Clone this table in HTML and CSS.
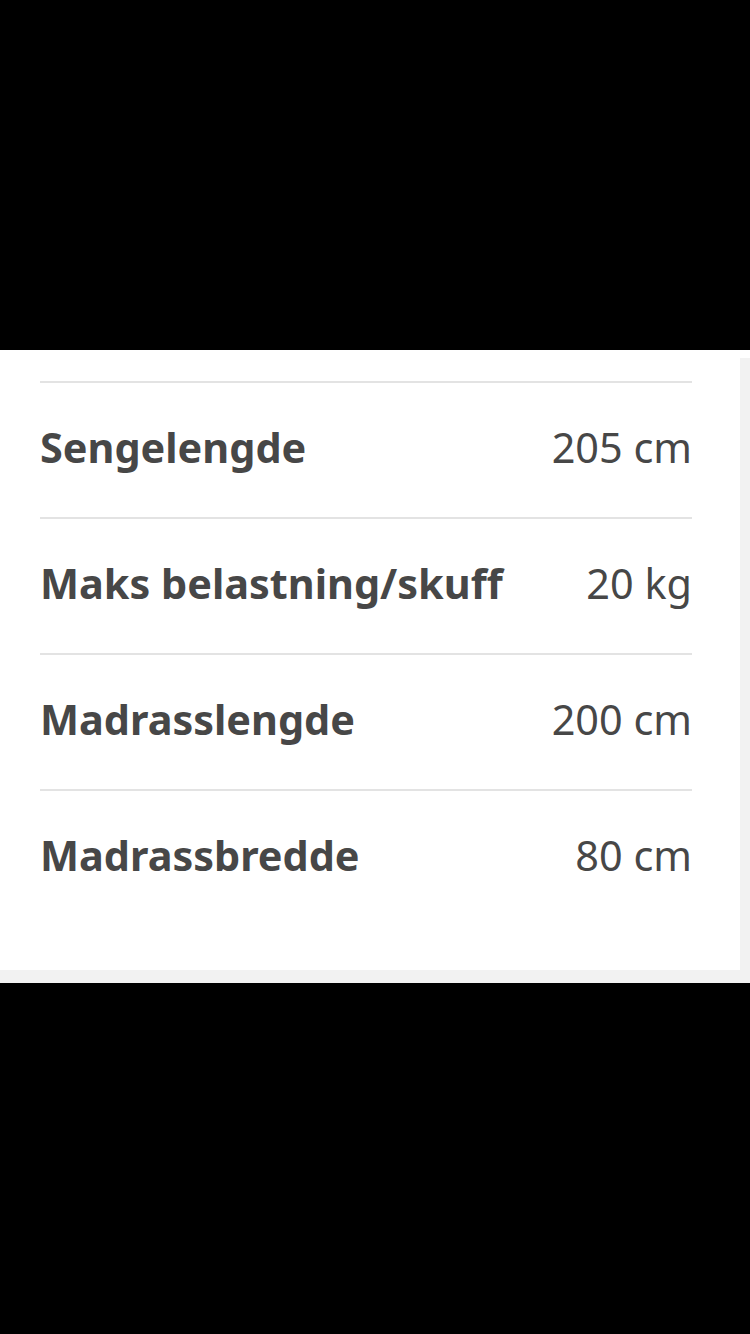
FILE: index.html
```html
<!DOCTYPE html>
<html>
<head>
  <title>Produktmål</title>
  <link rel="stylesheet" href="styles.css">
</head>
<body>
  <div class="top-black"></div>

  <div class="sheet">
    <div class="panel">
      <div class="spec-row">
        <span class="spec-name">Sengelengde</span>
        <span class="spec-value">205 cm</span>
      </div>
      <div class="spec-row">
        <span class="spec-name">Maks belastning/skuff</span>
        <span class="spec-value">20 kg</span>
      </div>
      <div class="spec-row">
        <span class="spec-name">Madrasslengde</span>
        <span class="spec-value">200 cm</span>
      </div>
      <div class="spec-row">
        <span class="spec-name">Madrassbredde</span>
        <span class="spec-value">80 cm</span>
      </div>
    </div>
  </div>

  <div class="bottom-black"></div>
</body>
</html>
```

FILE: styles.css
```css
html, body {
  margin: 0;
  padding: 0;
  background-color: #000000;
  font-family: "Noto Sans", "Open Sans", sans-serif;
}

.top-black {
  height: 350px;
}

.sheet {
  background: linear-gradient(#ffffff 8px, #f2f2f2 8px);
  padding-bottom: 13px;
}

.panel {
  width: 740px;
  background-color: #ffffff;
  box-sizing: border-box;
  padding: 31px 48px 45px 40px;
}

.spec-row {
  display: flex;
  justify-content: space-between;
  align-items: center;
  height: 136px;
  box-sizing: border-box;
  border-top: 2px solid #e3e3e3;
  padding-bottom: 6px;
  color: #474747;
  font-size: 41.4px;
}

.spec-name {
  font-weight: bold;
}

.spec-value {
  font-weight: normal;
}

.bottom-black {
  height: 350px;
}
```
